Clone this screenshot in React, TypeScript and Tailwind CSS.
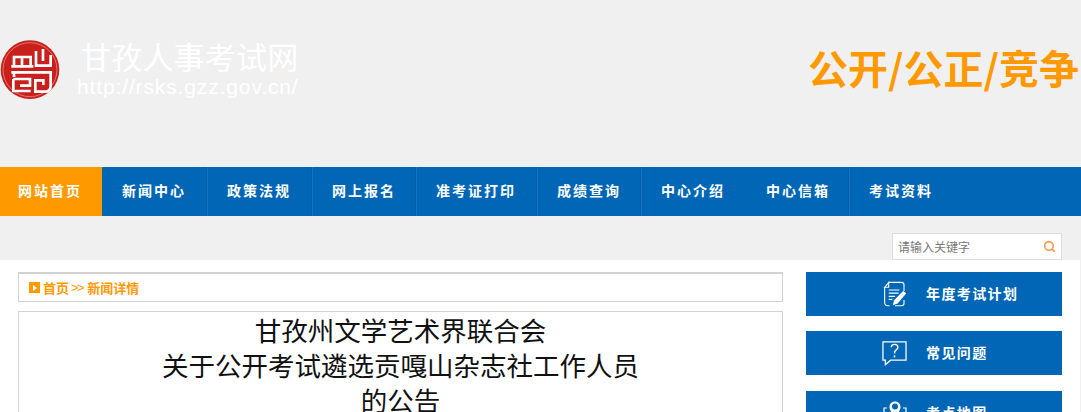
import { Search } from "lucide-react";

const cjk = "font-['Noto_Sans_CJK_SC','Liberation_Sans',sans-serif]";
const line = "border-r border-[#055da8] shadow-[1px_0_0_#1274c6]";

const NAV = [
  { label: "网站首页", cls: "w-[102px] bg-[#ff9900] pl-[18px]" },
  { label: "新闻中心", cls: `w-[105px] pl-5 ${line}` },
  { label: "政策法规", cls: `w-[105px] pl-5 ${line}` },
  { label: "网上报名", cls: `w-[104px] pl-5 ${line}` },
  { label: "准考证打印", cls: `w-[121px] pl-5 ${line}` },
  { label: "成绩查询", cls: `w-[104px] pl-5 ${line}` },
  { label: "中心介绍", cls: "w-[105px] pl-5" },
  { label: "中心信箱", cls: `w-[103px] pl-5 ${line}` },
  { label: "考试资料", cls: "w-[105px] pl-5" },
];

function Logo() {
  return (
    <svg width="60" height="60" viewBox="0 15 180 180" className="shrink-0">
      <circle cx="90" cy="104" r="88" fill="#c9201c" />
      <circle cx="90" cy="104" r="81" fill="none" stroke="#e8a09a" strokeWidth="2" />
      <g fill="none" stroke="#fff" strokeWidth="8">
        <path d="M42 94 V66 H92 V94 M66 66 V94 M34 94 H100" />
        <path d="M108 48 V92 H152 V60 M129 42 V78" />
        <path d="M34 112 H152 V152 Q152 170 134 170 H106 V136 H130 V150" />
        <path d="M42 112 V126 M40 132 H90 V152 H60 M40 132 V168 H92" />
      </g>
    </svg>
  );
}

function PlanIcon() {
  return (
    <svg width="24" height="27" viewBox="0 0 26 30" fill="none" stroke="#fff" className="shrink-0">
      <path d="M6 1.5 H20 Q23 1.5 23 4.5 V11 M1.5 7 L6 1.5 V7 Z M1.5 7 V24 Q1.5 27.5 5 27.5 H7 M13 27.5 H20 Q23 27.5 23 25 V21" strokeWidth="1.2" />
      <path d="M6 10 H18 M6 13.5 H17 M6 17 H13 M6 20.5 H10" strokeWidth="1.3" />
      <path d="M22 11 L25.5 13.5 L16 25 L10.5 27 L12 21.5 Z" fill="#fff" stroke="none" />
    </svg>
  );
}

function HelpIcon() {
  return (
    <svg width="25" height="25" viewBox="0 0 26 26" fill="none" stroke="#fff" strokeWidth="1.3" className="shrink-0">
      <path d="M1 1 H25 V20 H9 L3.5 24.5 V20 H1 Z" />
      <path d="M9.5 6.5 Q10 3.5 13 3.5 Q16.5 3.5 16.5 6.5 Q16.5 8.5 14.5 9.5 Q13 10.5 13 13" strokeWidth="1.5" />
      <path d="M13 15 V17" strokeWidth="1.6" />
    </svg>
  );
}

function PinIcon() {
  return (
    <svg width="24" height="26" viewBox="0 0 24 26" fill="none" stroke="#fff" className="shrink-0">
      <path d="M12 1.5 C8.5 1.5 6.5 4 6.5 7 C6.5 11 10 14 12 17 C14 14 17.5 11 17.5 7 C17.5 4 15.5 1.5 12 1.5 Z" fill="#fff" stroke="none" />
      <circle cx="12" cy="6.5" r="3" fill="#0066b5" stroke="none" />
      <path d="M4 8 H1 V24.5 H23 V8 H20" strokeWidth="1.2" />
    </svg>
  );
}

function SideButton({ icon, label, cls }: { icon: React.ReactNode; label: string; cls: string }) {
  return (
    <div className={`flex h-11 shrink-0 items-center bg-[#0066b5] pl-[76px] ${cls}`}>
      <div className="flex w-[25px] justify-center">{icon}</div>
      <span className="pb-[2px] text-[14px] font-bold tracking-[1.4px] whitespace-nowrap text-white">{label}</span>
    </div>
  );
}

export default function App() {
  return (
    <div className={`h-[412px] w-[1081px] overflow-hidden bg-[#f0f0f0] ${cjk}`}>
      <header className="flex h-[167px] justify-between pr-[2px]">
        <div className="flex items-start pt-10">
          <Logo />
          <div className="-mt-1 pl-[17px] text-white">
            <div className="h-[39px] pl-[3px] text-[31px] leading-[39px] font-normal tracking-[0.2px]">甘孜人事考试网</div>
            <div className="font-['Liberation_Sans',sans-serif] text-[21px] leading-6 tracking-[0.87px] whitespace-nowrap">http://rsks.gzz.gov.cn/</div>
          </div>
        </div>
        <div className="pt-[35px] text-[40px] leading-[64px] font-bold whitespace-nowrap text-[#ff9900]">公开/公正/竞争</div>
      </header>

      <nav className="flex h-[49px] bg-[#0066b5]">
        {NAV.map((item) => (
          <div
            key={item.label}
            className={`flex items-center pb-[2px] text-[14px] font-bold tracking-[2px] whitespace-nowrap text-white ${item.cls}`}
          >
            {item.label}
          </div>
        ))}
      </nav>

      <div className="flex h-11 items-end justify-end pr-[19px]">
        <div className="relative z-10 flex h-[27px] w-[170px] items-center justify-between border border-[#dddddd] bg-white px-[5px] text-xs text-[#777777]">
          <span>请输入关键字</span>
          <Search size={13} strokeWidth={3} className="text-[#f2994a]" />
        </div>
      </div>

      <main className="flex h-[152px] gap-[23px] overflow-hidden border-r border-[#f0f0f0] bg-white pt-3 pl-[18px]">
        <div className="w-[765px] shrink-0">
          <div className="flex h-[30px] items-center gap-[2px] border border-t-2 border-[#d2d2d2] pl-[10px] text-[13px] font-bold text-[#ff9900]">
            <span className="mr-[1px] flex h-[11px] w-[11px] items-center justify-center bg-[#ff9900]">
              <span className="h-0 w-0 border-y-[3px] border-l-[4px] border-y-transparent border-l-white" />
            </span>
            <span>首页</span>
            <span className="font-['Liberation_Sans',sans-serif] font-normal tracking-[-1.5px]">&gt;&gt;</span>
            <span className="pl-[2px]">新闻详情</span>
          </div>
          <article className="mt-[9px] h-[120px] border border-b-0 border-[#d2d2d2] text-center text-[26.5px] leading-[35px] text-[#111111]">
            <p>甘孜州文学艺术界联合会</p>
            <p>关于公开考试遴选贡嘎山杂志社工作人员</p>
            <p>的公告</p>
          </article>
        </div>
        <aside className="flex w-64 shrink-0 flex-col">
          <SideButton icon={<PlanIcon />} label="年度考试计划" cls="gap-[19px]" />
          <SideButton icon={<HelpIcon />} label="常见问题" cls="mt-[15px] gap-[19px]" />
          <SideButton icon={<PinIcon />} label="考点地图" cls="mt-4 gap-[19px]" />
        </aside>
      </main>
    </div>
  );
}
